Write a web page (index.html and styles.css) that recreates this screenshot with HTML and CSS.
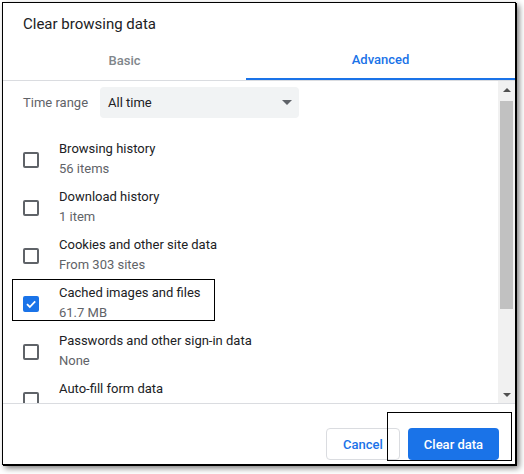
FILE: index.html
```html
<!DOCTYPE html>
<html>
<head>
<meta charset="utf-8">
<link rel="stylesheet" href="styles.css">
</head>
<body>
<div class="dialog">
  <div class="title">Clear browsing data</div>
  <div class="tabs">
    <div class="tab basic">Basic</div>
    <div class="tab active">Advanced</div>
  </div>
  <div class="body">
    <div class="list">
      <div class="range">
        <span class="range-label">Time range</span>
        <div class="select">
          <span>All time</span>
          <span class="arrow"></span>
        </div>
      </div>
      <div class="row">
        <span class="cb"></span>
        <div class="txt"><div class="p">Browsing history</div><div class="s">56 items</div></div>
      </div>
      <div class="row">
        <span class="cb"></span>
        <div class="txt"><div class="p">Download history</div><div class="s">1 item</div></div>
      </div>
      <div class="row">
        <span class="cb"></span>
        <div class="txt"><div class="p">Cookies and other site data</div><div class="s">From 303 sites</div></div>
      </div>
      <div class="row">
        <span class="cb checked"><svg width="12" height="12" viewBox="0 0 12 12"><path d="M2 6.2 L4.8 9 L10.2 3.4" fill="none" stroke="#fff" stroke-width="1.8"/></svg></span>
        <div class="txt"><div class="p">Cached images and files</div><div class="s">61.7 MB</div></div>
      </div>
      <div class="row">
        <span class="cb"></span>
        <div class="txt"><div class="p">Passwords and other sign-in data</div><div class="s">None</div></div>
      </div>
      <div class="row">
        <span class="cb"></span>
        <div class="txt"><div class="p">Auto-fill form data</div><div class="s">&nbsp;</div></div>
      </div>
    </div>
    <div class="scrollbar">
      <div class="sb-btn"><span class="up"></span></div>
      <div class="sb-track"><div class="sb-thumb"></div></div>
      <div class="sb-btn"><span class="down"></span></div>
    </div>
  </div>
  <div class="footer">
    <button class="btn cancel">Cancel</button>
    <button class="btn primary">Clear data</button>
  </div>
</div>
<div class="mark mark-cached"></div>
<div class="mark mark-clear"></div>
</body>
</html>
```
FILE: styles.css
```css
html, body {
  margin: 0;
  padding: 0;
  background: #fff;
}
body {
  width: 524px;
  height: 474px;
  position: relative;
  font-family: Roboto, "Liberation Sans", sans-serif;
  overflow: hidden;
}
.dialog {
  position: absolute;
  left: 2px;
  top: 2px;
  width: 512px;
  height: 461px;
  border: 1px solid #000;
  background: #fff;
  display: flex;
  flex-direction: column;
  box-shadow: 1px 1px 0 #000, 3px 3px 6px rgba(0,0,0,0.55);
}
.title {
  padding: 11px 0 2px 20px;
  font-size: 15px;
  line-height: 20px;
  color: #202124;
}
.tabs {
  display: flex;
  border-bottom: 1px solid #dadce0;
}
.tab {
  height: 44px;
  box-sizing: border-box;
  padding-top: 5px;
  display: flex;
  align-items: center;
  justify-content: center;
  font-size: 13px;
  font-weight: 500;
  line-height: 20px;
  color: #80868b;
}
.tab.basic {
  width: 243px;
}
.tab.active {
  flex: 1;
  color: #1a73e8;
  border-bottom: 2px solid #1a73e8;
}
.body {
  height: 322px;
  display: flex;
  border-bottom: 1px solid #dadce0;
}
.list {
  flex: 1;
  overflow: hidden;
  padding: 6px 0 0 20px;
}
.range {
  display: flex;
  align-items: center;
  height: 31px;
  margin-bottom: 17px;
}
.range-label {
  font-size: 13px;
  color: #5f6368;
  width: 77px;
}
.select {
  width: 199px;
  height: 31px;
  box-sizing: border-box;
  background: #f1f3f4;
  border-radius: 4px;
  display: flex;
  align-items: center;
  justify-content: space-between;
  padding: 0 7px 0 8px;
  font-size: 13px;
  color: #202124;
}
.arrow {
  width: 0;
  height: 0;
  border-left: 5px solid transparent;
  border-right: 5px solid transparent;
  border-top: 5px solid #5f6368;
}
.row {
  display: flex;
  align-items: center;
  height: 48px;
  flex-shrink: 0;
}
.cb {
  width: 16px;
  height: 16px;
  box-sizing: border-box;
  border: 2px solid #5f6368;
  border-radius: 2px;
  margin: 2px 20px 0 0;
  display: flex;
  align-items: center;
  justify-content: center;
  flex-shrink: 0;
}
.cb.checked {
  background: #1a73e8;
  border-color: #1a73e8;
}
.txt {
  font-size: 13px;
  line-height: 20px;
}
.p {
  color: #202124;
}
.s {
  color: #5f6368;
}
.scrollbar {
  width: 17px;
  background: #f1f1f1;
  display: flex;
  flex-direction: column;
}
.sb-btn {
  height: 17px;
  display: flex;
  align-items: center;
  justify-content: center;
}
.up {
  width: 0;
  height: 0;
  border-left: 4px solid transparent;
  border-right: 4px solid transparent;
  border-bottom: 4px solid #505050;
}
.down {
  width: 0;
  height: 0;
  border-left: 4px solid transparent;
  border-right: 4px solid transparent;
  border-top: 4px solid #505050;
}
.sb-track {
  flex: 1;
  padding: 3px 2px 0 2px;
}
.sb-thumb {
  height: 208px;
  background: #c1c1c1;
}
.footer {
  flex: 1;
  display: flex;
  justify-content: flex-end;
  align-items: flex-start;
  gap: 8px;
  padding: 24px 16px 0 0;
}
.btn {
  height: 32px;
  border-radius: 4px;
  font-family: Roboto, "Liberation Sans", sans-serif;
  font-size: 13px;
  font-weight: 500;
  padding: 0;
  margin: 0;
  cursor: pointer;
}
.cancel {
  width: 74px;
  background: #fff;
  border: 1px solid #dadce0;
  color: #1a73e8;
}
.primary {
  width: 91px;
  background: #1a73e8;
  border: none;
  color: #fff;
}
.mark {
  position: absolute;
  border: 1px solid #000;
  box-sizing: border-box;
}
.mark-cached {
  left: 12px;
  top: 279px;
  width: 203px;
  height: 42px;
}
.mark-clear {
  left: 387px;
  top: 412px;
  width: 125px;
  height: 49px;
}
```
